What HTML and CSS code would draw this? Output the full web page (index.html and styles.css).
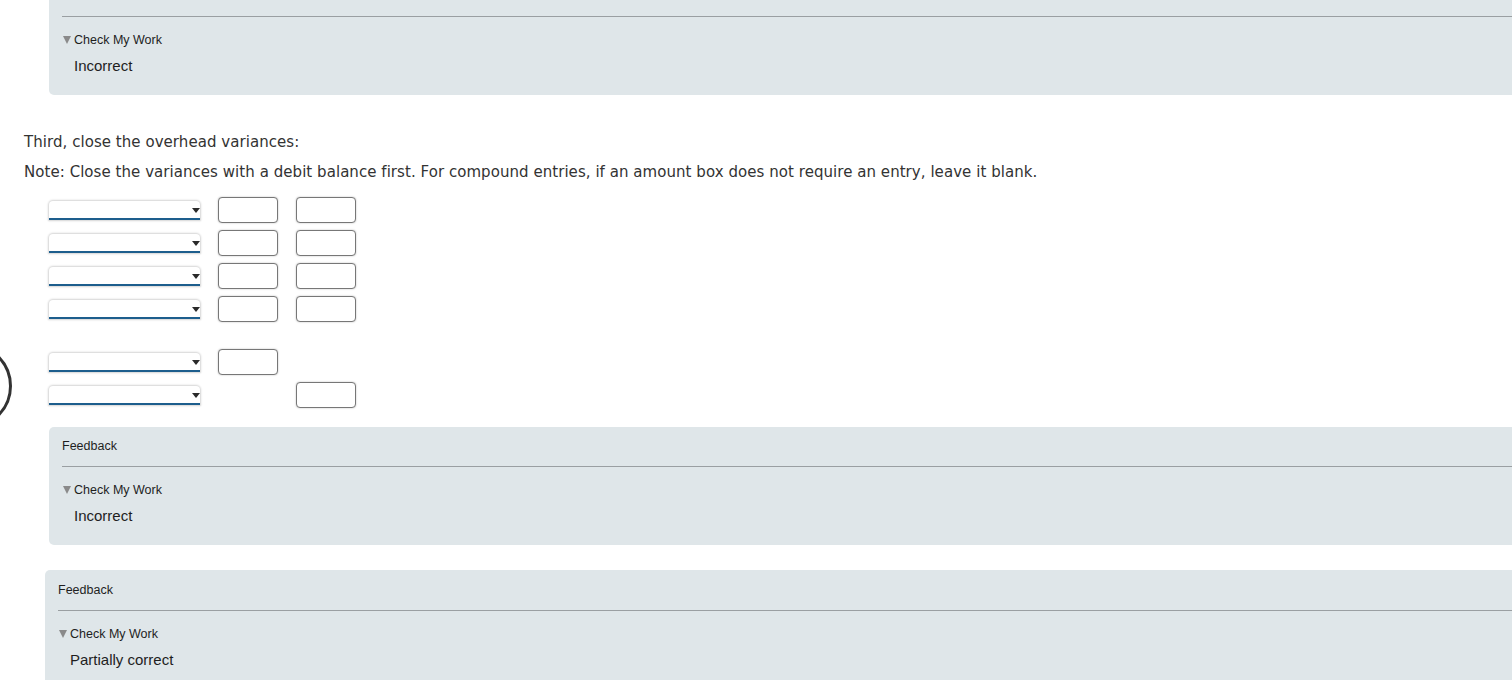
FILE: index.html
```html
<!DOCTYPE html>
<html>
<head>
<meta charset="utf-8">
<link rel="stylesheet" href="styles.css">
</head>
<body>
<div class="page">
  <div class="panel panel-top">
    <hr class="rule">
    <div class="cmw"><span class="tri"></span>Check My Work</div>
    <div class="result">Incorrect</div>
  </div>

  <p class="q">Third, close the overhead variances:</p>
  <p class="note">Note: Close the variances with a debit balance first. For compound entries, if an amount box does not require an entry, leave it blank.</p>

  <div class="entries">
    <div class="group">
      <div class="row"><span class="sel"></span><span class="amt"></span><span class="amt"></span></div>
      <div class="row"><span class="sel"></span><span class="amt"></span><span class="amt"></span></div>
      <div class="row"><span class="sel"></span><span class="amt"></span><span class="amt"></span></div>
      <div class="row"><span class="sel"></span><span class="amt"></span><span class="amt"></span></div>
    </div>
    <div class="group">
      <div class="row"><span class="sel"></span><span class="amt"></span></div>
      <div class="row"><span class="sel"></span><span class="blank"></span><span class="amt"></span></div>
    </div>
  </div>

  <div class="panel panel-mid">
    <div class="fb">Feedback</div>
    <hr class="rule">
    <div class="cmw"><span class="tri"></span>Check My Work</div>
    <div class="result">Incorrect</div>
  </div>

  <div class="panel panel-last">
    <div class="fb fb-last">Feedback</div>
    <hr class="rule">
    <div class="cmw"><span class="tri"></span>Check My Work</div>
    <div class="result">Partially correct</div>
  </div>

  <div class="ring"></div>
</div>
</body>
</html>
```

FILE: styles.css
```css
html, body {
  margin: 0;
  padding: 0;
  background: #fff;
  overflow: hidden;
}
.page {
  position: relative;
  width: 1512px;
  height: 680px;
  overflow: hidden;
}
.panel {
  background: #dfe6e9;
  margin-left: 49px;
  margin-right: -20px;
  border-radius: 5px;
  padding: 0 0 0 13px;
  font-family: "Liberation Sans", Arial, sans-serif;
  color: #1e1e1e;
}
.panel-top {
  border-radius: 0 0 5px 5px;
  padding-top: 16px;
  height: 79px;
}
.panel-mid {
  margin-top: 19px;
  height: 118px;
}
.panel-last {
  margin-left: 45px;
  margin-top: 25px;
  height: 130px;
}
.rule {
  margin: 0;
  border: 0;
  border-top: 1px solid #9a9fa2;
  height: 0;
}
.fb {
  font-size: 12.5px;
  height: 39px;
  padding-top: 1px;
  box-sizing: border-box;
  line-height: 37px;
}
.fb-last {
  height: 40px;
  line-height: 38px;
}
.cmw {
  font-size: 12.5px;
  line-height: 16px;
  margin-top: 15px;
  display: flex;
  align-items: center;
  padding-left: 1px;
}
.tri {
  width: 0;
  height: 0;
  border-left: 4.5px solid transparent;
  border-right: 4.5px solid transparent;
  border-top: 8px solid #8a8a8a;
  margin-right: 3px;
  margin-top: -1px;
}
.result {
  font-size: 15px;
  line-height: 18px;
  margin-top: 9px;
  padding-left: 12px;
}
.q, .note {
  font-family: "DejaVu Sans", Verdana, sans-serif;
  font-size: 15px;
  letter-spacing: 0.05px;
  color: #333;
  margin: 0;
  padding-left: 24px;
  line-height: 20px;
}
.q {
  margin-top: 37px;
}
.note {
  margin-top: 10px;
}
.entries {
  padding-left: 49px;
  margin-top: 15px;
  display: flex;
  flex-direction: column;
  gap: 27px;
}
.group {
  display: flex;
  flex-direction: column;
  gap: 7px;
}
.row {
  display: flex;
  align-items: center;
  gap: 18px;
  height: 26px;
}
.sel {
  position: relative;
  width: 151px;
  height: 17px;
  background: #fff;
  border-radius: 4px 4px 0 0;
  box-shadow: 0 0 2px 1px #d4d4d4;
  border-bottom: 2px solid #1d5e8d;
}
.sel::after {
  content: "";
  position: absolute;
  right: 0;
  top: 7px;
  border-left: 4px solid transparent;
  border-right: 4px solid transparent;
  border-top: 5px solid #2a2a2a;
}
.amt {
  width: 58px;
  height: 24px;
  background: #fff;
  border: 1px solid #777;
  border-radius: 4px;
  box-shadow: 0 0 2px #bbb;
}
.blank {
  width: 60px;
  height: 26px;
}
.ring {
  position: absolute;
  left: -74px;
  top: 343px;
  width: 80px;
  height: 80px;
  border: 3px solid #333;
  border-radius: 50%;
}
```
